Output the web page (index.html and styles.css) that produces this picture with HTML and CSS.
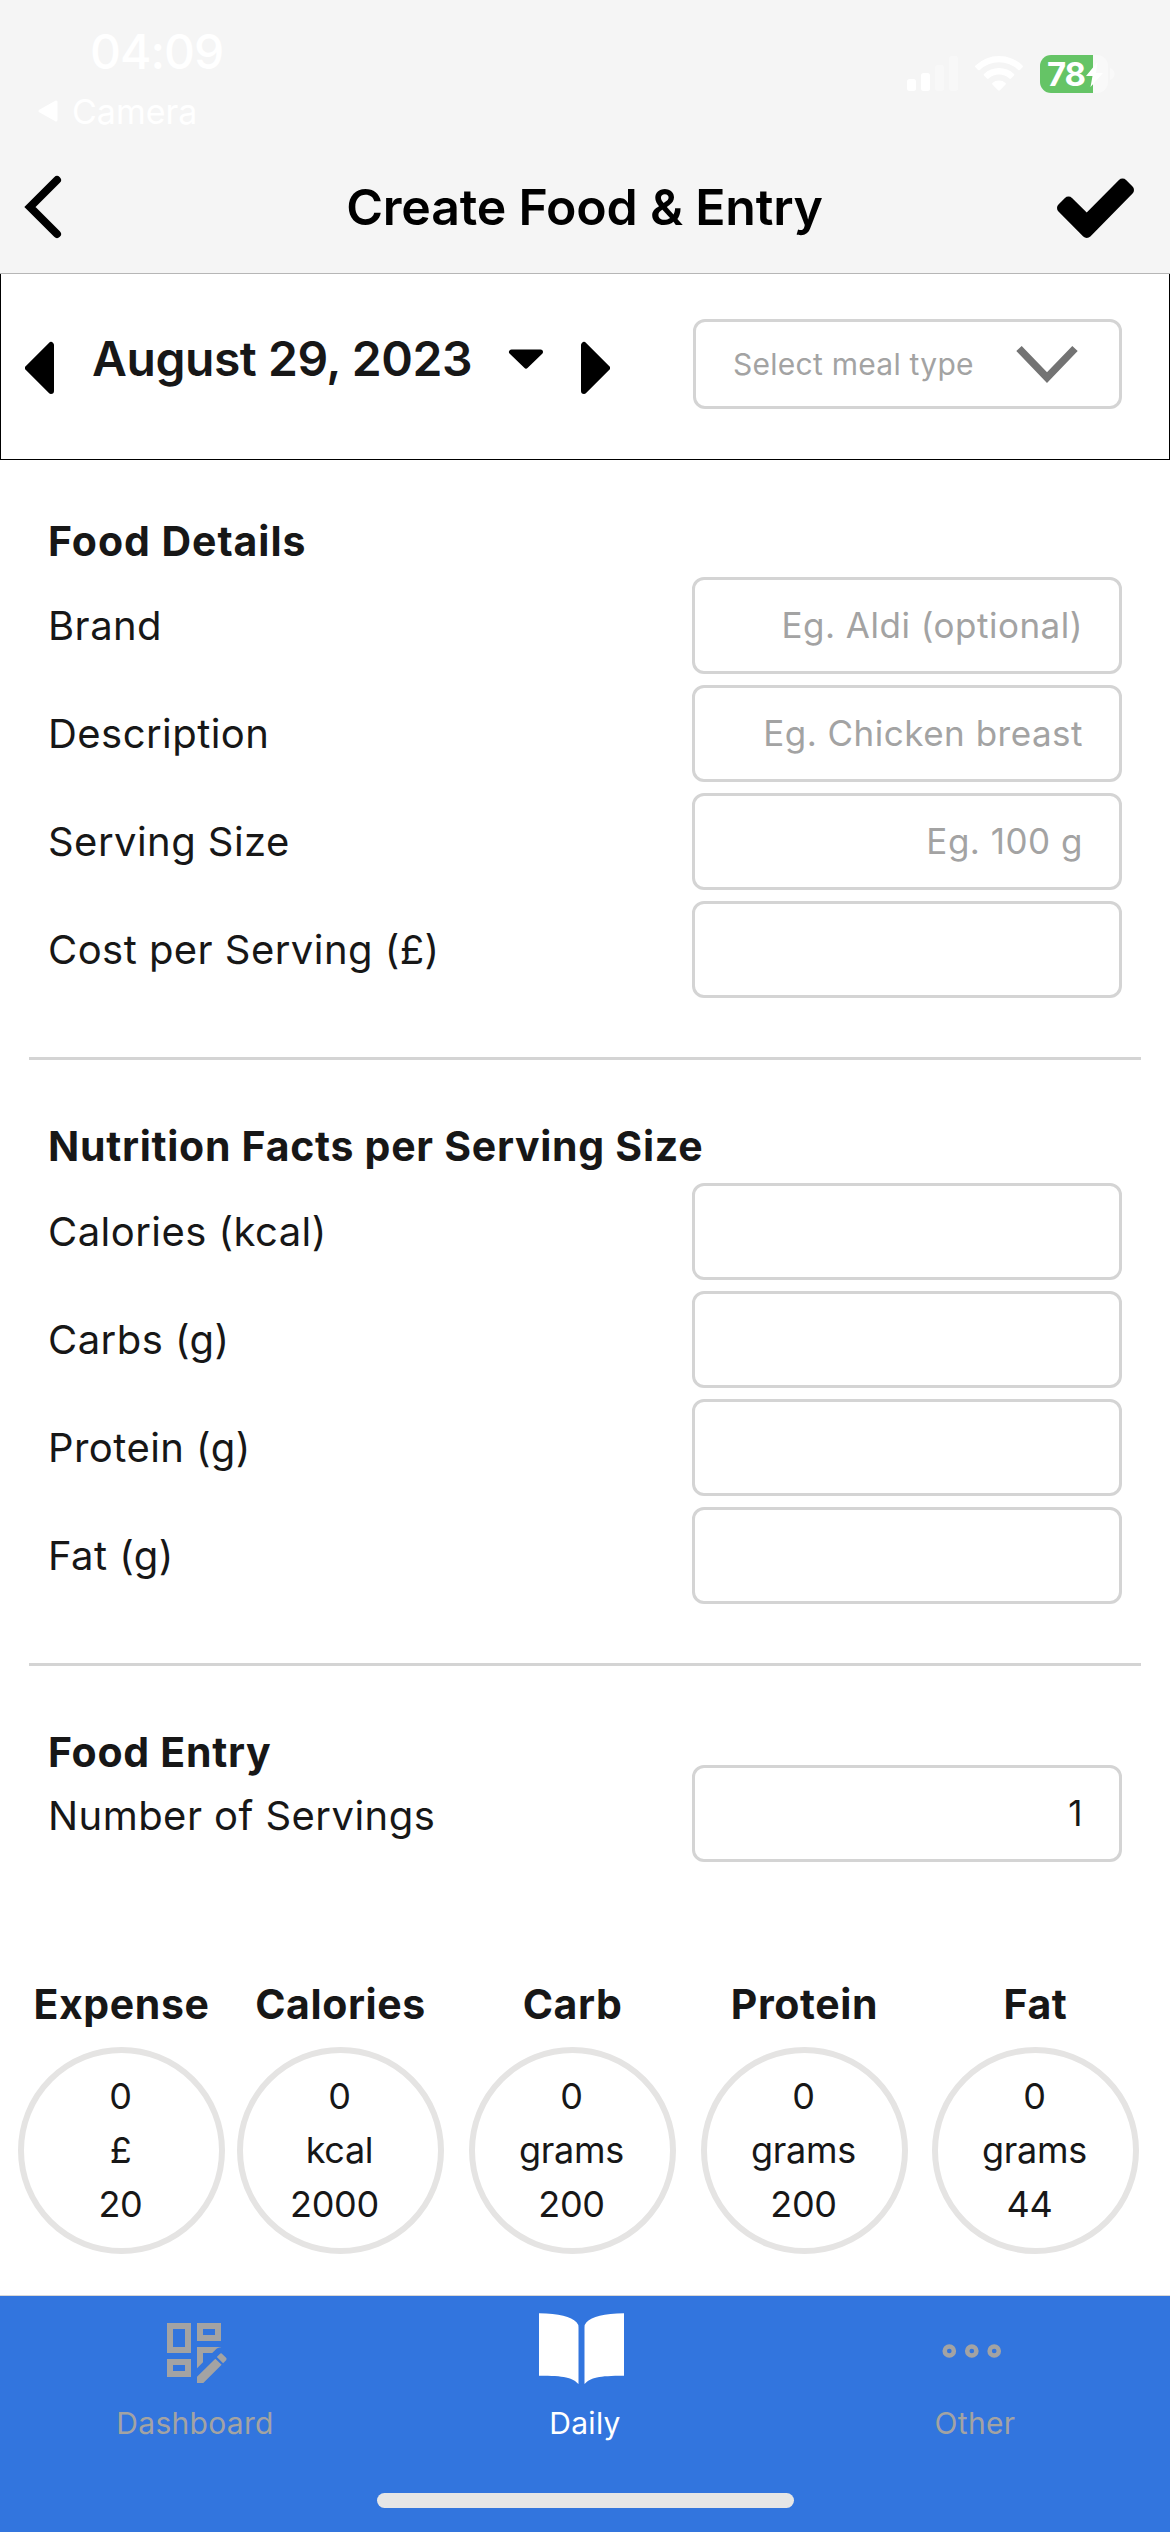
FILE: index.html
```html
<!DOCTYPE html>
<html lang="en">
<head>
<meta charset="utf-8">
<title>Create Food &amp; Entry</title>
<link rel="stylesheet" href="styles.css">
</head>
<body>
<header class="header">
  <div class="status">
    <div class="status-left">
      <div class="time">04:09</div>
      <div class="back-app">
        <svg width="22" height="24" viewBox="0 0 22 24"><path d="M3 12 19 3v18z" fill="#fff" stroke="#fff" stroke-width="3" stroke-linejoin="round"/></svg>
        <span>Camera</span>
      </div>
    </div>
    <div class="status-right">
      <svg width="52" height="36" viewBox="0 0 52 36">
        <rect x="0" y="24" width="9" height="12" rx="2.5" fill="#fff"/>
        <rect x="14" y="18" width="9" height="18" rx="2.5" fill="#fff"/>
        <rect x="28" y="10" width="9" height="26" rx="2.5" fill="#f8f8f8"/>
        <rect x="42" y="1" width="9" height="35" rx="2.5" fill="#f8f8f8"/>
      </svg>
      <svg class="wifi" width="48" height="36" viewBox="0 0 48 36" fill="#fff">
        <path d="M0.5 10.5a34 34 0 0 1 47 0c.6.6.6 1.200.1 1.700l-2.700 2.700c-.5.500-1.200.5-1.700 0a28 28 0 0 0-38.400 0c-.5.500-1.200.5-1.700 0L.4 12.200c-.5-.5-.5-1.100.1-1.700z"/>
        <path d="M9 19a22 22 0 0 1 30 0c.5.500.5 1.100 0 1.600l-3 3c-.5.500-1.100.5-1.600 0a15.500 15.500 0 0 0-20.800 0c-.5.500-1.100.5-1.600 0l-3-3c-.5-.5-.5-1.100 0-1.600z"/>
        <path d="M17.400 28a10 10 0 0 1 13.200 0c.5.500.5 1 0 1.500l-5.700 5.800c-.5.500-1.300.5-1.800 0l-5.700-5.800c-.5-.5-.5-1 0-1.500z"/>
      </svg>
      <div class="battery">
        <span class="battery-level">78</span>
        <svg class="bolt" width="18" height="25" viewBox="0 0 18 25"><path d="M11.500 0 0 14h6.500L4.500 25 17 11h-7z" fill="#fff"/></svg>
      </div>
      <svg class="nub" width="5" height="12" viewBox="0 0 5 12"><path d="M0 0c6 2 6 10 0 12z" fill="#f9f9f9"/></svg>
    </div>
  </div>
  <div class="titlebar">
    <svg width="40" height="64" viewBox="0 0 40 64"><path d="M35 5 8 32 35 59" fill="none" stroke="#000" stroke-width="8" stroke-linecap="round"/></svg>
    <h1>Create Food &amp; Entry</h1>
    <svg width="80" height="62" viewBox="0 0 80 62"><path d="M7 32 31.800 57 74 14 67.500 7.500 31.800 43.500 13.500 25.500z" fill="#000" stroke="#000" stroke-width="10" stroke-linejoin="round"/></svg>
  </div>
</header>

<section class="daybar">
  <svg class="prev" width="30" height="54" viewBox="0 0 30 54"><path d="M3 27 26 4v46z" fill="#000" stroke="#000" stroke-width="6" stroke-linejoin="round"/></svg>
  <div class="date">August 29, 2023</div>
  <svg class="caret" width="36" height="20" viewBox="0 0 36 20"><path d="M3.500 3h29L18 17z" fill="#000" stroke="#000" stroke-width="5" stroke-linejoin="round"/></svg>
  <svg class="next" width="30" height="54" viewBox="0 0 30 54"><path d="M27 27 4 4v46z" fill="#000" stroke="#000" stroke-width="6" stroke-linejoin="round"/></svg>
  <div class="select">
    <span>Select meal type</span>
    <svg width="62" height="38" viewBox="0 0 62 38"><path d="M3 3.500 31 32.500 59 3.500" fill="none" stroke="#737373" stroke-width="7.500"/></svg>
  </div>
</section>

<main>
  <section class="group first">
    <h2>Food Details</h2>
    <div class="row"><span>Brand</span><div class="input hint">Eg. Aldi (optional)</div></div>
    <div class="row"><span>Description</span><div class="input hint">Eg. Chicken breast</div></div>
    <div class="row"><span>Serving Size</span><div class="input hint">Eg. 100 g</div></div>
    <div class="row"><span>Cost per Serving (£)</span><div class="input"></div></div>
  </section>
  <hr>
  <section class="group facts">
    <h2>Nutrition Facts per Serving Size</h2>
    <div class="row"><span>Calories (kcal)</span><div class="input"></div></div>
    <div class="row"><span>Carbs (g)</span><div class="input"></div></div>
    <div class="row"><span>Protein (g)</span><div class="input"></div></div>
    <div class="row"><span>Fat (g)</span><div class="input"></div></div>
  </section>
  <hr>
  <section class="group entry">
    <h2>Food Entry</h2>
    <div class="row"><span>Number of Servings</span><div class="input">1</div></div>
  </section>
  <section class="totals">
    <div class="total"><h3>Expense</h3><div class="ring"><span>0</span><span>£</span><span>20</span></div></div>
    <div class="total"><h3>Calories</h3><div class="ring shifted"><span>0</span><span>kcal</span><span>2000</span></div></div>
    <div class="total"><h3>Carb</h3><div class="ring"><span>0</span><span>grams</span><span>200</span></div></div>
    <div class="total"><h3>Protein</h3><div class="ring"><span>0</span><span>grams</span><span>200</span></div></div>
    <div class="total"><h3>Fat</h3><div class="ring shifted"><span>0</span><span>grams</span><span>44</span></div></div>
  </section>
</main>

<nav class="tabs">
  <div class="tab">
    <svg width="110" height="100" viewBox="0 0 110 100"><path transform="translate(18 14) scale(3)" fill="#a3a3a3" fill-rule="evenodd" d="M21 13.100C20.900 13.100 20.700 13.200 20.600 13.300L19.600 14.300 21.700 16.400 22.700 15.400C22.900 15.200 22.900 14.800 22.700 14.600L21.400 13.300C21.300 13.200 21.200 13.100 21 13.100M19.100 14.900 13 20.900V23H15.100L21.200 16.900 19.100 14.900M21 9H13V3H21V9M19 5H15V7H19V5M13 18.060V11H21V11.100C20.240 11.100 19.570 11.500 19.190 11.890L18.070 13H15V16.070L13 18.060M11 13H3V3H11V13M9 5H5V11H9V5M11 21H3V15H11V21M9 17H5V19H9V17Z"/></svg>
    <span>Dashboard</span>
  </div>
  <div class="tab active">
    <svg width="110" height="100" viewBox="0 0 110 100" fill="#fff"><path d="M9 13.300c20 0 32 3.500 37.500 9q2 2 2 5V84C42 77.500 35 75.700 9 75.700z"/><path d="M94 13.300c-20 0-32 3.500-37.500 9q-2 2-2 5V84C61 77.500 68 75.700 94 75.700z"/></svg>
    <span>Daily</span>
  </div>
  <div class="tab">
    <svg width="110" height="100" viewBox="0 0 110 100" fill="none" stroke="#a3a3a3" stroke-width="4.500"><circle cx="29.300" cy="51" r="4.600"/><circle cx="51.800" cy="51" r="4.600"/><circle cx="74.200" cy="51" r="4.600"/></svg>
    <span>Other</span>
  </div>
  <div class="home"></div>
</nav>
</body>
</html>
```
FILE: styles.css
```css
* { box-sizing: border-box; }
body {
  margin: 0;
  width: 1170px;
  height: 2532px;
  display: flex;
  flex-direction: column;
  background: #fff;
  color: #171717;
  font-family: Inter, "Liberation Sans", sans-serif;
  overflow: hidden;
}
svg { display: block; flex: none; }
h1, h2, h3 { margin: 0; }

.header { height: 274px; background: #f5f5f5; border-bottom: 1px solid #b6b6b6; }
.status { height: 141px; display: flex; justify-content: space-between; color: #fff; }
.status-left { padding: 22px 0 0 37px; }
.time { padding-left: 53px; font-size: 48px; font-weight: 500; line-height: 60px; letter-spacing: -1px; }
.back-app { display: flex; align-items: center; gap: 13px; height: 40px; margin-top: 9px; font-size: 34px; }
.status-right { display: flex; align-items: flex-start; padding: 55px 55px 0 0; }
.wifi { margin-left: 16px; }
.battery {
  display: flex;
  align-items: center;
  margin-left: 17px;
  width: 68px;
  height: 38px;
  padding-left: 7px;
  border-radius: 11px;
  background: linear-gradient(90deg, #65c466 53px, #f9f9f9 53px);
}
.battery-level { font-size: 33px; font-weight: 700; letter-spacing: -1.2px; line-height: 38px; }
.bolt { margin-left: 1px; }
.nub { margin: 13px 0 0 2px; }
.titlebar {
  height: 132px;
  display: flex;
  align-items: center;
  justify-content: space-between;
  padding: 0 35px 0 22px;
}
.titlebar h1 { padding-left: 52px; color: #000; font-size: 50px; font-weight: 600; letter-spacing: -0.2px; }

.daybar {
  height: 186px;
  display: flex;
  align-items: flex-start;
  padding: 45px 47px 0 24px;
  border: 1px solid #000;
  border-top: 0;
}
.prev, .next { margin-top: 22px; }
.date { margin-left: 37px; width: 382px; font-size: 48px; font-weight: 600; line-height: 60px; margin-top: 10px; letter-spacing: -0.450px; white-space: nowrap; }
.caret { margin: 30px 0 0 34px; }
.next { margin-left: 36px; }
.select {
  margin-left: auto;
  width: 429px;
  height: 90px;
  display: flex;
  align-items: center;
  justify-content: space-between;
  padding: 0 41px 0 37px;
  border: 3px solid #d4d4d4;
  border-radius: 12px;
  color: #a3a3a3;
  font-size: 30px;
  letter-spacing: 0.260px;
}

.group { padding: 62px 48px 59px; display: flex; flex-direction: column; }
.group.first { padding-top: 57px; }
.group h2 { font-size: 41px; font-weight: 700; line-height: 48px; letter-spacing: 0.720px; margin-bottom: 12px; }
.first h2 { letter-spacing: 0.950px; }
.facts h2 { margin-bottom: 13px; }
.row { display: flex; justify-content: space-between; align-items: center; height: 97px; font-size: 40px; letter-spacing: 0.450px; }
.row + .row { margin-top: 11px; }
.input {
  width: 430px;
  height: 97px;
  padding-right: 36px;
  border: 3px solid #d4d4d4;
  border-radius: 12px;
  text-align: right;
  font-size: 35px;
  line-height: 91px;
  letter-spacing: 0.500px;
}
.hint { color: #a3a3a3; }
hr { margin: 0 29px; border: 0; height: 3px; background: #d4d4d4; }
.entry { padding-bottom: 0; }
.group.entry h2 { margin-bottom: -11px; }
.entry .row > span { padding-top: 3px; }

.totals { display: flex; padding: 118px 0 0 18px; }
.total { width: 207px; margin-right: 25px; text-align: center; }
.total:first-child { margin-right: 12px; }
.total:nth-child(4) { margin-right: 24px; }
.total h3 { font-size: 41px; line-height: 48px; font-weight: 700; letter-spacing: 0.600px; margin-bottom: 19px; }
.ring {
  height: 207px;
  padding: 16px 2px 0 0;
  border: 6px solid #e5e4e3;
  border-radius: 50%;
  display: flex;
  flex-direction: column;
  font-size: 36px;
  line-height: 54px;
  letter-spacing: -0.300px;
}
.shifted span:last-child { padding-right: 10px; }

.tabs {
  margin-top: auto;
  height: 237px;
  display: grid;
  grid-template-columns: repeat(3, 1fr);
  grid-template-rows: 197px auto;
  background: #3275de;
  border-top: 1px solid #d8d8d8;
}
.tab { display: flex; flex-direction: column; align-items: center; padding-top: 4px; color: #a3a3a3; font-size: 30px; line-height: 40px; letter-spacing: 0.300px; }
.tab span { margin-top: 3px; }
.active { color: #fff; }
.home { grid-column: 1 / -1; justify-self: center; width: 417px; height: 15px; border-radius: 8px; background: #e6e6e6; }
```
